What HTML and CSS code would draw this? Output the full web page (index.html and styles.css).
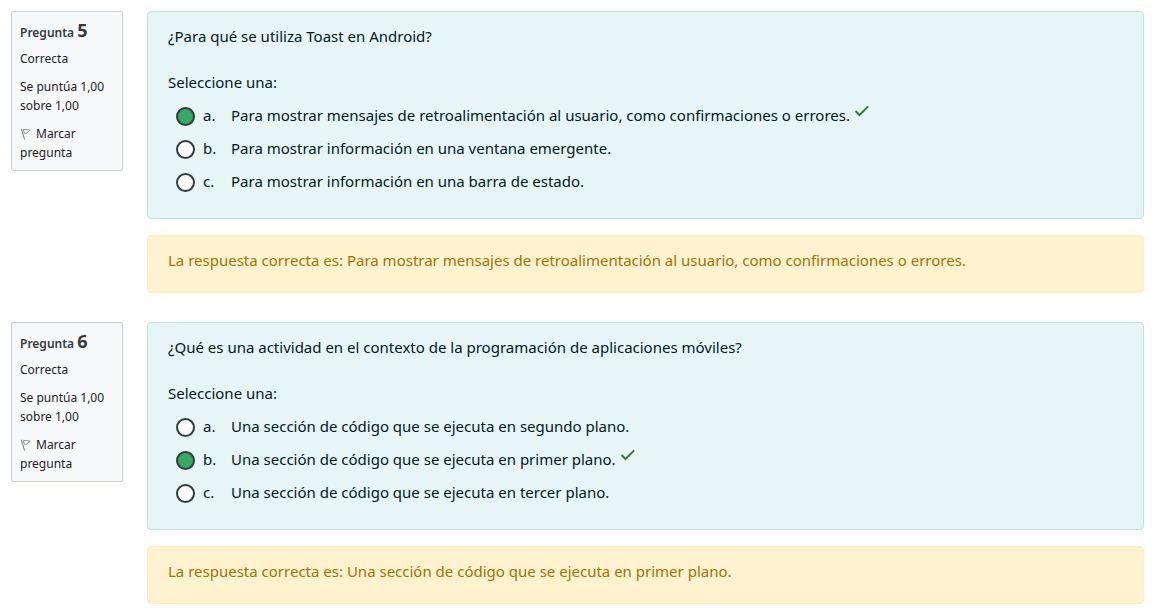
FILE: index.html
```html
<!DOCTYPE html>
<html lang="es">
<head>
<meta charset="utf-8">
<meta name="viewport" content="width=device-width, initial-scale=1">
<title>Revisión del cuestionario</title>
<link rel="stylesheet" href="styles.css">
</head>
<body>
<main class="quiz">
  <section class="question">
    <aside class="info">
      <h3 class="info-title">Pregunta <span class="number">5</span></h3>
      <p class="info-line">Correcta</p>
      <p class="info-line">Se puntúa 1,00 sobre 1,00</p>
      <a class="flag" href="#"><svg class="flag-icon" viewBox="0 0 12 14" aria-hidden="true"><path class="pole" d="M1.3 1.8 4.6 12.6"/><path d="M3.2 2.4 10.2 3 5.8 6.6 4.4 6.4Z"/></svg>Marcar pregunta</a>
    </aside>
    <div class="content">
      <div class="formulation">
        <p class="text">¿Para qué se utiliza Toast en Android?</p>
        <fieldset class="answers">
          <legend class="prompt">Seleccione una:</legend>
          <div class="answer">
            <input class="radio" type="radio" name="q5" id="q5a" checked>
            <label class="label" for="q5a"><span class="letter">a.</span><span>Para mostrar mensajes de retroalimentación al usuario, como confirmaciones o errores.</span></label>
            <svg class="check" viewBox="0 0 16 12" role="img" aria-label="Correcta"><path d="M1.5 6 5.5 10 14.2 1.4"/></svg>
          </div>
          <div class="answer">
            <input class="radio" type="radio" name="q5" id="q5b">
            <label class="label" for="q5b"><span class="letter">b.</span><span>Para mostrar información en una ventana emergente.</span></label>
          </div>
          <div class="answer">
            <input class="radio" type="radio" name="q5" id="q5c">
            <label class="label" for="q5c"><span class="letter">c.</span><span>Para mostrar información en una barra de estado.</span></label>
          </div>
        </fieldset>
      </div>
      <div class="feedback">La respuesta correcta es: Para mostrar mensajes de retroalimentación al usuario, como confirmaciones o errores.</div>
    </div>
  </section>
  <section class="question">
    <aside class="info">
      <h3 class="info-title">Pregunta <span class="number">6</span></h3>
      <p class="info-line">Correcta</p>
      <p class="info-line">Se puntúa 1,00 sobre 1,00</p>
      <a class="flag" href="#"><svg class="flag-icon" viewBox="0 0 12 14" aria-hidden="true"><path class="pole" d="M1.3 1.8 4.6 12.6"/><path d="M3.2 2.4 10.2 3 5.8 6.6 4.4 6.4Z"/></svg>Marcar pregunta</a>
    </aside>
    <div class="content">
      <div class="formulation">
        <p class="text">¿Qué es una actividad en el contexto de la programación de aplicaciones móviles?</p>
        <fieldset class="answers">
          <legend class="prompt">Seleccione una:</legend>
          <div class="answer">
            <input class="radio" type="radio" name="q6" id="q6a">
            <label class="label" for="q6a"><span class="letter">a.</span><span>Una sección de código que se ejecuta en segundo plano.</span></label>
          </div>
          <div class="answer">
            <input class="radio" type="radio" name="q6" id="q6b" checked>
            <label class="label" for="q6b"><span class="letter">b.</span><span>Una sección de código que se ejecuta en primer plano.</span></label>
            <svg class="check" viewBox="0 0 16 12" role="img" aria-label="Correcta"><path d="M1.5 6 5.5 10 14.2 1.4"/></svg>
          </div>
          <div class="answer">
            <input class="radio" type="radio" name="q6" id="q6c">
            <label class="label" for="q6c"><span class="letter">c.</span><span>Una sección de código que se ejecuta en tercer plano.</span></label>
          </div>
        </fieldset>
      </div>
      <div class="feedback">La respuesta correcta es: Una sección de código que se ejecuta en primer plano.</div>
    </div>
  </section>
</main>
</body>
</html>
```

FILE: styles.css
```css
* {
  box-sizing: border-box;
}

body {
  margin: 0;
  background: #fff;
  color: #001a1e;
  font-family: "Noto Sans", sans-serif;
  font-size: 15px;
  line-height: 24px;
}

.quiz {
  display: flex;
  flex-direction: column;
  gap: 29px;
  padding: 11px 8px 8px 11px;
}

.question {
  display: flex;
  align-items: flex-start;
  gap: 24px;
}

.info {
  flex: none;
  width: 112px;
  padding: 8px;
  border: 1px solid #cad0d7;
  border-radius: 2px;
  background: #f8f9fa;
  color: #1d2125;
  font-size: 12px;
  line-height: 19px;
}

.info-title {
  margin: 0 0 6px;
  color: #343a40;
  font-size: 12px;
  font-weight: 600;
  line-height: 21px;
}

.number {
  font-size: 18px;
  font-weight: 700;
}

.info-line {
  margin: 0 0 9px;
}

.flag {
  display: block;
  color: inherit;
  text-decoration: none;
}

.flag-icon {
  width: 12px;
  height: 14px;
  margin-right: 4px;
  vertical-align: -3px;
  fill: none;
  stroke: #999;
  stroke-width: 1;
}

.pole {
  stroke: #777;
}

.content {
  flex: 1;
  min-width: 0;
}

.formulation {
  margin-bottom: 16px;
  padding: 12px 20px 21px;
  border: 1px solid #b8e2e8;
  border-radius: 4px;
  background: #e7f5f7;
}

.text {
  margin: 0 0 22px;
}

.answers {
  margin: 0;
  padding: 0;
  border: 0;
}

.prompt {
  padding: 0 0 4px;
}

.answer {
  display: flex;
  align-items: center;
  min-height: 33px;
  padding-left: 8px;
}

.radio {
  appearance: none;
  flex: none;
  width: 19px;
  height: 19px;
  margin: 4px 8px 0 0;
  border: 2px solid #343a40;
  border-radius: 50%;
  background: #fff;
}

.radio:checked {
  background: #35aa62;
}

.label {
  display: flex;
}

.letter {
  flex: none;
  width: 28px;
}

.check {
  flex: none;
  width: 16px;
  height: 12px;
  margin: 0 0 8px 4px;
  fill: none;
  stroke: #357a32;
  stroke-width: 2;
}

.feedback {
  padding: 12px 20px 20px;
  border: 1px solid #ffeeba;
  border-radius: 4px;
  background: #fff2cf;
  color: #a07300;
}
```
